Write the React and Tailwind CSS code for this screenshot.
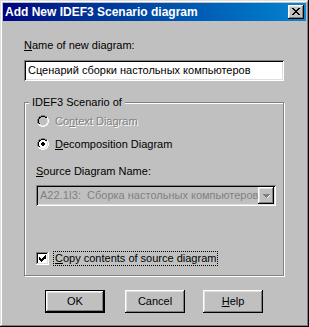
import React from 'react';

// classic 3d edges
const RAISED = 'shadow-[inset_-1px_-1px_#000000,inset_1px_1px_#ffffff,inset_-2px_-2px_#808080,inset_2px_2px_#dfdfdf]';
const SUNKEN = 'shadow-[inset_1px_1px_#808080,inset_-1px_-1px_#ffffff,inset_2px_2px_#000000,inset_-2px_-2px_#dfdfdf]';

const RADIO = [
  '....GGGG....',
  '..GGKKKKGG..',
  '.GKKiiiiKKW.',
  '.GKiiiiiiDW.',
  'GKiiiooiiiDW',
  'GKiioooojiDW',
  'GKiioooojiDW',
  'GKiiiooiiiDW',
  '.GKiiiiiiDW.',
  '.WDDiiiiDDW.',
  '..WWDDDDWW..',
  '....WWWW....',
];

const CHECKBOX = [
  'GGGGGGGGGGGGW',
  'GKKKKKKKKKKDW',
  'GKiiiiiiiiiDW',
  'GKiiiiiiioiDW',
  'GKiiiiiiooiDW',
  'GKioiiiooMiDW',
  'GKiooiooooiDW',
  'GKioooooiiiDW',
  'GKiioooiiiiDW',
  'GKiiioiiiiiDW',
  'GKiiiiiiiiiDW',
  'GDDDDDDDDDDDW',
  'WWWWWWWWWWWWW',
];

const CLOSE_X = [
  'KK....KK',
  '.KK..KK.',
  '..KKKK..',
  '...KK...',
  '..KKKK..',
  '.KK..KK.',
  'KK....KK',
];

const ARROW = [
  'GGGGGGG.',
  '.GGGGGW.',
  '..GGGW..',
  '...GW...',
];

function Pixels({ rows, colors, className }) {
  const w = rows[0].length;
  const h = rows.length;
  const rects = [];
  rows.forEach((row, y) => {
    [...row].forEach((ch, x) => {
      const fill = colors[ch];
      if (fill) rects.push(<rect key={`${x}-${y}`} x={x} y={y} width="1" height="1" fill={fill} />);
    });
  });
  return (
    <svg width={w} height={h} viewBox={`0 0 ${w} ${h}`} shapeRendering="crispEdges" className={className}>
      {rects}
    </svg>
  );
}

const edge = { G: '#808080', K: '#000000', W: '#ffffff', D: '#dfdfdf' };

function Radio({ checked, disabled }) {
  const inner = disabled ? '#c0c0c0' : '#ffffff';
  const dot = checked ? (disabled ? '#808080' : '#000000') : inner;
  return <Pixels rows={RADIO} colors={{ ...edge, i: inner, o: dot, j: inner }} className="shrink-0" />;
}

function Button({ children, isDefault, className = '' }) {
  return (
    <div
      className={`flex h-[23px] w-[60px] items-center justify-center bg-[#c0c0c0] ${isDefault ? 'border border-black' : ''} ${className}`}
    >
      <div className={`flex h-full w-full items-center justify-center ${RAISED}`}>{children}</div>
    </div>
  );
}

export default function App() {
  return (
    <div
      className={`h-[327px] w-[309px] bg-[#c0c0c0] p-[3px] font-['Liberation_Sans',sans-serif] text-[11px] text-black shadow-[inset_-1px_-1px_#000000,inset_1px_1px_#dfdfdf,inset_-2px_-2px_#808080,inset_2px_2px_#ffffff]`}
    >
      {/* title bar */}
      <div className="flex h-[18px] items-center bg-linear-to-r from-[#000080] to-[#1084d0]">
        <span className="pl-[2px] text-[12px] font-bold leading-[18px] text-white">Add New IDEF3 Scenario diagram</span>
        <div className={`mr-[2px] ml-auto flex h-[14px] w-[16px] items-start justify-start bg-[#c0c0c0] ${RAISED}`}>
          <Pixels rows={CLOSE_X} colors={edge} className="mt-[3px] ml-[4px]" />
        </div>
      </div>

      <div className="pl-[21px]">
        <div className="mt-[18px] leading-[13px]">
          <span className="underline">N</span>ame of new diagram:
        </div>
        <div className={`mt-[8px] h-[21px] w-[260px] bg-white pl-[4px] leading-[21px] ${SUNKEN}`}>
          Сценарий сборки настольных компьютеров
        </div>

        {/* group box */}
        <div className="mt-[21px] h-[174px] w-[260px] border border-[#808080] shadow-[inset_1px_1px_#ffffff,1px_1px_#ffffff]">
          <div className="-mt-[7px] ml-[4px] w-fit bg-[#c0c0c0] px-[3px] leading-[13px]">IDEF3 Scenario of</div>

          <div className="mt-[6px] ml-[12px] flex h-[12px] items-center gap-[6px]">
            <Radio disabled />
            <span className="leading-[12px] text-[#808080] [text-shadow:1px_1px_0_#ffffff]">
              Co<span className="underline">n</span>text Diagram
            </span>
          </div>

          <div className="mt-[11px] ml-[12px] flex h-[12px] items-center gap-[6px]">
            <Radio checked />
            <span className="leading-[12px]">
              <span className="underline">D</span>ecomposition Diagram
            </span>
          </div>

          <div className="mt-[15px] ml-[11px] leading-[13px]">
            <span className="underline">S</span>ource Diagram Name:
          </div>

          <div className={`mt-[7px] ml-[11px] flex h-[21px] w-[240px] bg-[#c0c0c0] p-[2px] ${SUNKEN}`}>
            <div className="min-w-0 flex-1 overflow-hidden whitespace-pre pl-[2px] leading-[17px] text-[#808080]">
              A22.1I3:  Сборка настольных компьютеров
            </div>
            <div className={`flex h-[17px] w-[16px] shrink-0 items-center justify-center bg-[#c0c0c0] ${RAISED}`}>
              <Pixels rows={ARROW} colors={edge} className="ml-[1px]" />
            </div>
          </div>

          <div className="mt-[46px] ml-[11px] flex h-[13px] items-center gap-[4px]">
            <Pixels rows={CHECKBOX} colors={{ ...edge, i: '#ffffff', o: '#000000', M: '#000000' }} className="shrink-0" />
            <span className="border border-dotted border-black px-[1px] leading-[13px]">
              <span className="underline">C</span>opy contents of source diagram
            </span>
          </div>
        </div>

        <div className="mt-[14px] flex">
          <Button isDefault className="ml-[21px]">OK</Button>
          <Button className="ml-[20px]">Cancel</Button>
          <Button className="ml-[18px]">
            <span>
              <span className="underline">H</span>elp
            </span>
          </Button>
        </div>
      </div>
    </div>
  );
}
